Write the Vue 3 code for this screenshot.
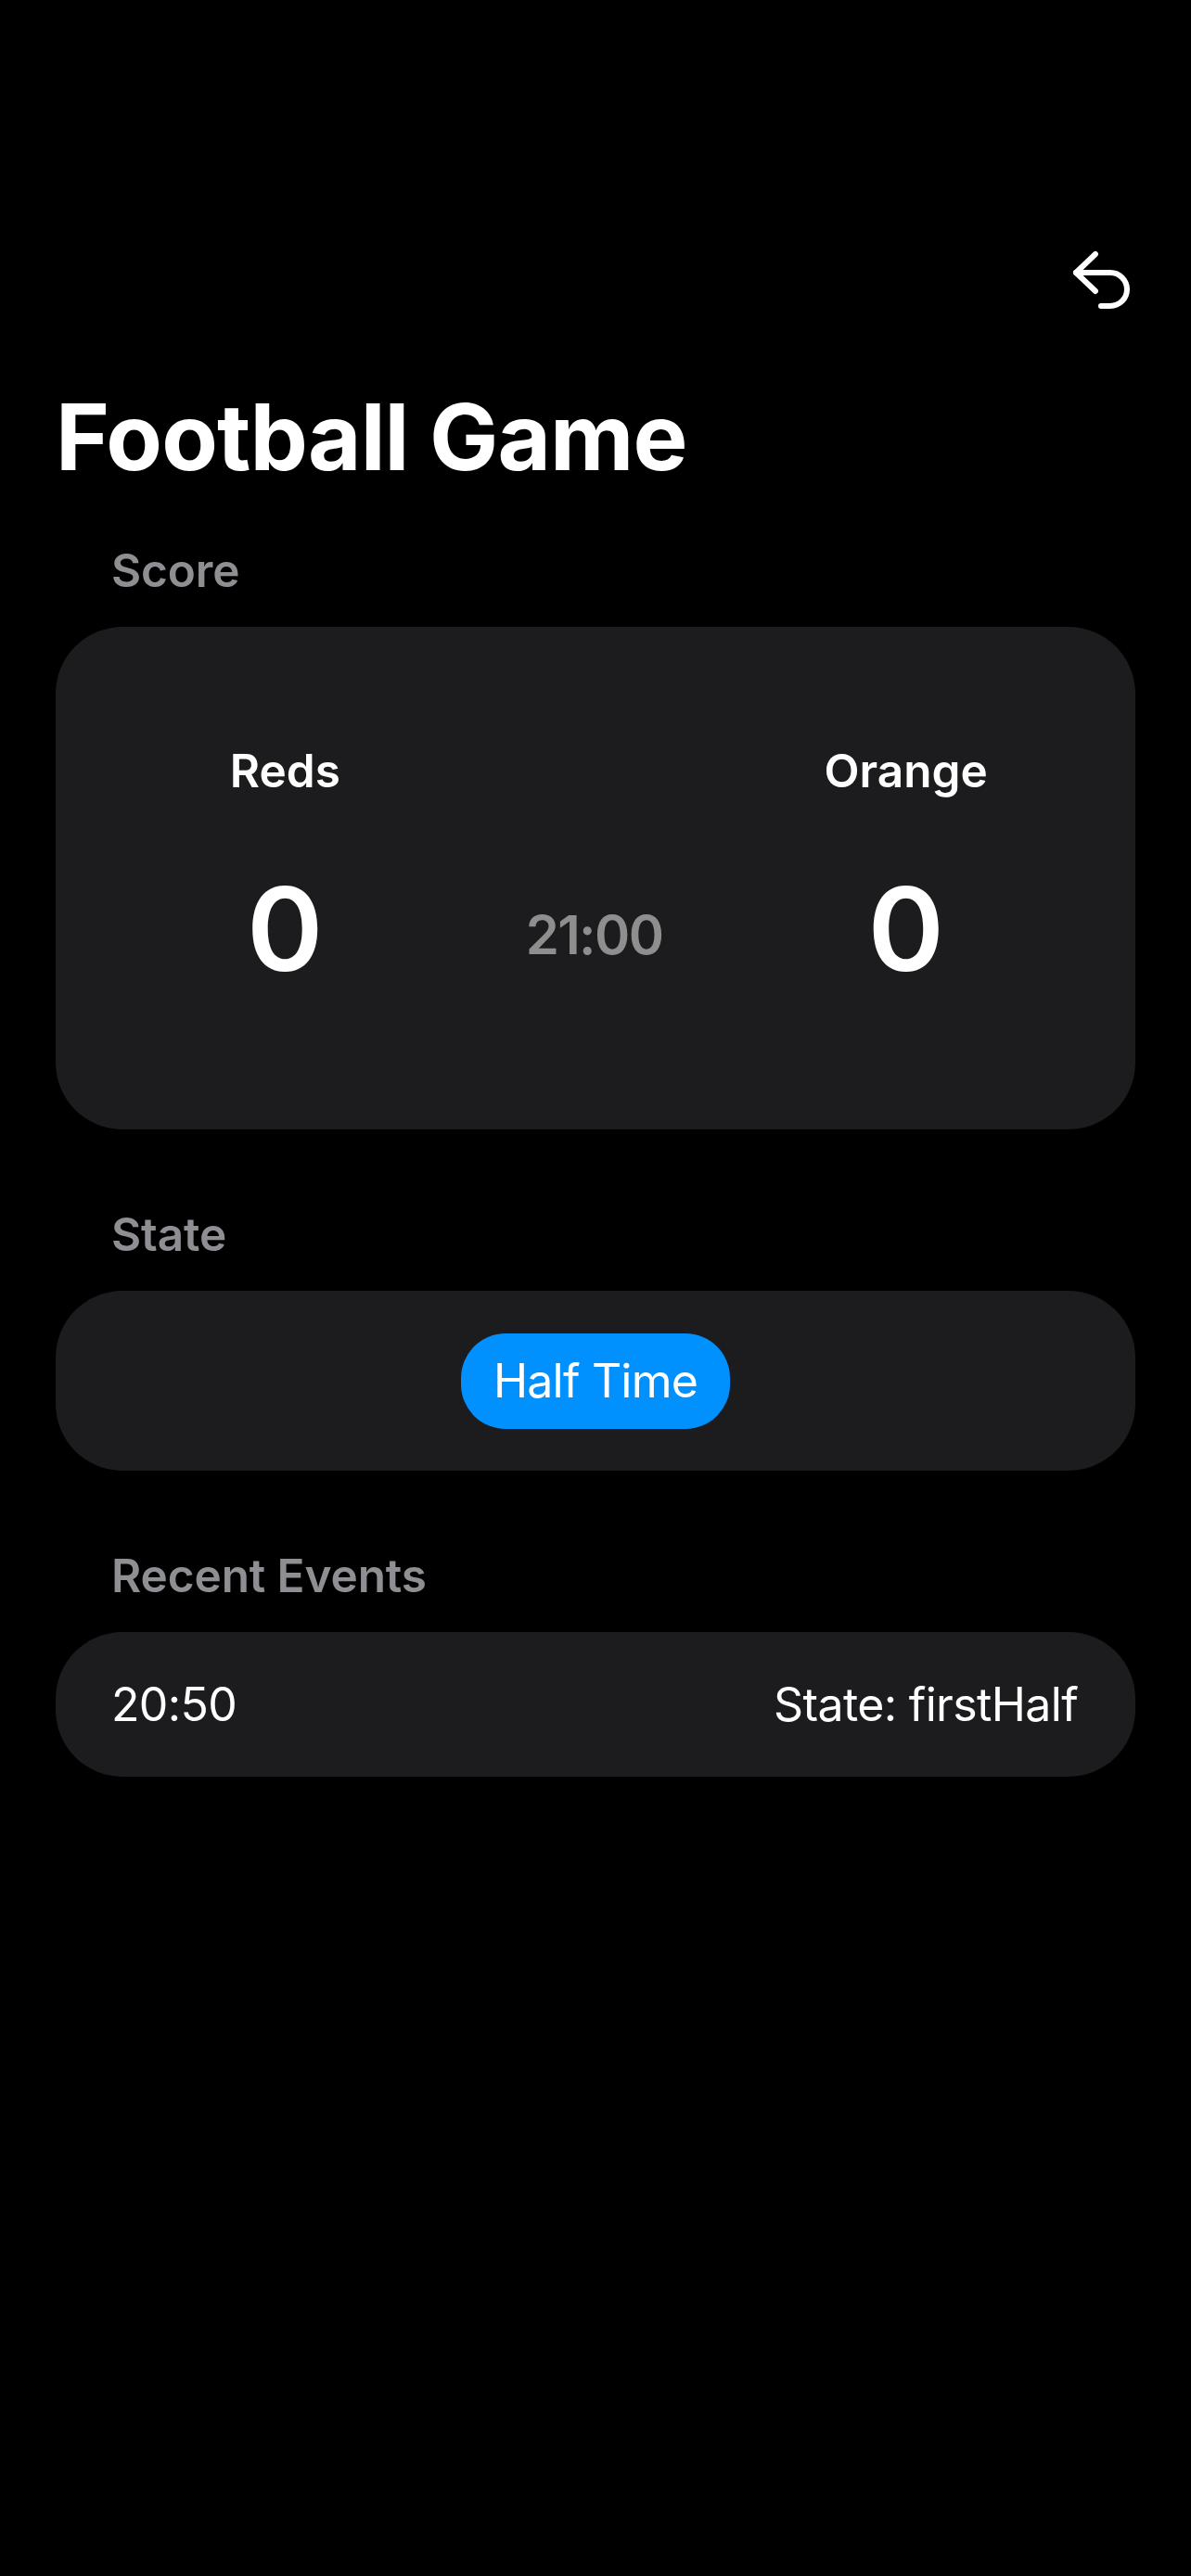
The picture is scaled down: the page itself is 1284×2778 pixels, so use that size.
<script setup>
const events = [{ time: '20:50', text: 'State: firstHalf' }]
</script>

<template>
  <main class="page">
    <header class="top">
      <button class="back" type="button" aria-label="Back">
        <svg width="66" height="64" viewBox="1154 270 66 64" fill="none" stroke="#fff" stroke-width="6" stroke-linecap="round" stroke-linejoin="round">
          <path d="M1180 274 L1159 294 L1180 314" />
          <path d="M1159 294 H1196 A18 18 0 0 1 1196 330 H1186" />
        </svg>
      </button>
    </header>

    <h1 class="title">Football Game</h1>

    <section class="section score-section">
      <h2 class="label">Score</h2>
      <div class="card score">
        <div class="team">
          <div class="team-name">Reds</div>
          <div class="goals">0</div>
        </div>
        <div class="clock">21:00</div>
        <div class="team">
          <div class="team-name">Orange</div>
          <div class="goals">0</div>
        </div>
      </div>
    </section>

    <section class="section state-section">
      <h2 class="label">State</h2>
      <div class="card state">
        <span class="pill">Half Time</span>
      </div>
    </section>

    <section class="section events-section">
      <h2 class="label">Recent Events</h2>
      <div class="card events">
        <div v-for="e in events" :key="e.time" class="event">
          <span>{{ e.time }}</span>
          <span>{{ e.text }}</span>
        </div>
      </div>
    </section>
  </main>
</template>

<style scoped>
.page {
  box-sizing: border-box;
  width: 1284px;
  height: 2778px;
  background: #000;
  color: #fff;
  font-family: Inter, "Liberation Sans", sans-serif;
  padding: 270px 60px 0;
  overflow: hidden;
}
.top {
  display: flex;
  justify-content: flex-end;
  height: 64px;
  padding-right: 3px;
}
.back {
  background: none;
  border: 0;
  padding: 0;
  height: 64px;
}
.back svg {
  display: block;
}
.title {
  margin: 79px 0 0;
  font-size: 99px;
  line-height: 116px;
  font-weight: 700;
  letter-spacing: -0.9px;
}
.section {
  display: flex;
  flex-direction: column;
}
.score-section {
  margin-top: 57px;
}
.state-section {
  margin-top: 84px;
}
.events-section {
  margin-top: 84px;
}
.label {
  margin: 0 0 32px;
  padding-left: 60px;
  font-size: 49.5px;
  line-height: 58px;
  font-weight: 600;
  letter-spacing: -0.1px;
  color: #8e8e93;
}
.card {
  background: #1c1c1e;
  border-radius: 72px;
}
.score {
  height: 542px;
  box-sizing: border-box;
  padding: 0 80px;
  display: grid;
  grid-template-columns: 1fr 1fr 1fr;
  align-items: start;
}
.team {
  display: flex;
  flex-direction: column;
  align-items: center;
  padding-top: 126px;
}
.team-name {
  font-size: 49.5px;
  line-height: 58px;
  font-weight: 600;
}
.goals {
  margin-top: 66px;
  font-size: 125px;
  line-height: 152px;
  font-weight: 600;
}
.clock {
  margin-top: 297px;
  padding-right: 3px;
  text-align: center;
  font-size: 58px;
  line-height: 70px;
  font-weight: 600;
  letter-spacing: -1.6px;
  color: #8e8e8e;
}
.state {
  height: 194px;
  display: flex;
  align-items: center;
  justify-content: center;
}
.pill {
  box-sizing: border-box;
  width: 290px;
  height: 103px;
  border-radius: 48px;
  background: #0091ff;
  display: flex;
  align-items: center;
  justify-content: center;
  font-size: 50px;
  letter-spacing: -0.8px;
}
.events {
  height: 156px;
  box-sizing: border-box;
  padding: 0 62px 0 60px;
  display: flex;
  flex-direction: column;
  justify-content: center;
}
.event {
  display: flex;
  justify-content: space-between;
  font-size: 50px;
  line-height: 60px;
  letter-spacing: -0.65px;
}
</style>

<style>
html, body {
  background: #000;
}
</style>
